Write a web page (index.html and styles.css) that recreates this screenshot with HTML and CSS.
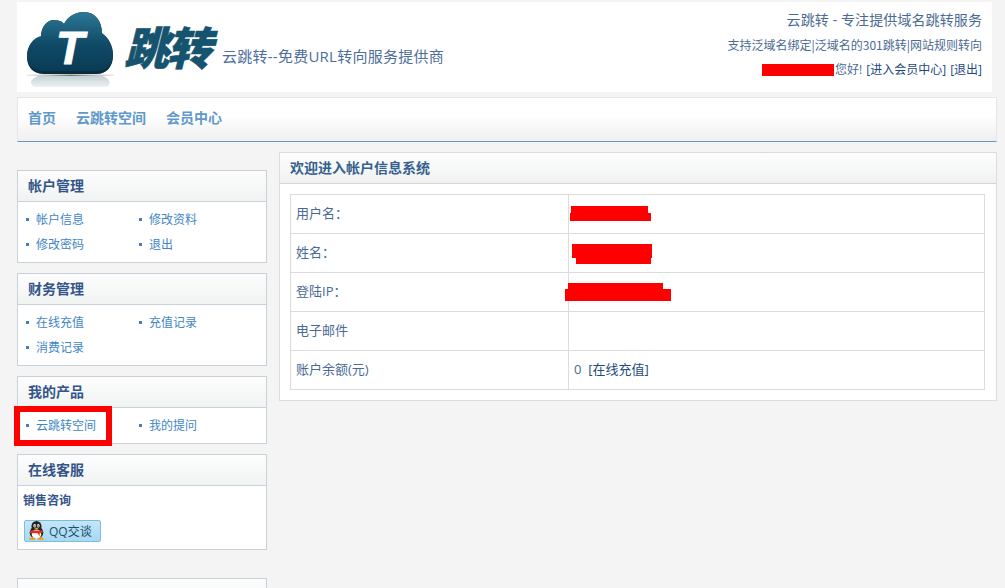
FILE: index.html
```html
<!DOCTYPE html>
<html lang="zh-CN">
<head>
<meta charset="utf-8">
<title>云跳转</title>
<link rel="stylesheet" href="styles.css">
</head>
<body>
<div class="page">
  <header class="top">
    <div class="brand">
      <svg class="cloud" width="90" height="78" viewBox="25 11 90 78" aria-hidden="true">
        <defs>
          <linearGradient id="cg" x1="0" y1="0" x2="0" y2="1">
            <stop offset="0" stop-color="#2d7896"/>
            <stop offset="0.55" stop-color="#0f4a66"/>
            <stop offset="1" stop-color="#0a3b55"/>
          </linearGradient>
          <linearGradient id="rg" x1="0" y1="0" x2="0" y2="1">
            <stop offset="0" stop-color="#c3d2d6"/>
            <stop offset="1" stop-color="#eef2f3"/>
          </linearGradient>
          <linearGradient id="sg" x1="0" y1="0" x2="1" y2="0">
            <stop offset="0" stop-color="#9a9a9a" stop-opacity="0.2"/>
            <stop offset="0.5" stop-color="#6f7a5a"/>
            <stop offset="1" stop-color="#9a9a9a" stop-opacity="0.2"/>
          </linearGradient>
        </defs>
        <path d="M38 76H103C110 79 111 83 108 87H34C29 83 30 79 38 76Z" fill="url(#rg)"/>
        <rect x="27" y="74.500" width="87" height="1.500" fill="url(#sg)"/>
        <path d="M44 74C33 74 27 67 27 57C27 47 33 39 41 37C41 27 47 20 54 20C58 20 62 21 64 24C68 16 76 12 84 12C95 12 102 21 102 34C108 38 113 46 113 56C113 67 106 74 97 74Z" fill="#072d42"/>
        <path d="M44 71C33 71 27 65 27 56C27 46 33 38 41 36C41 27 47 20 54 20C58 20 62 21 64 24C68 16 76 12 84 12C95 12 102 21 102 33C108 37 113 45 113 54C113 65 106 71 97 71Z" fill="url(#cg)"/>
        <text class="cloud-t" x="56" y="64">T</text>
      </svg>
      <span class="brand-name">跳转</span>
      <span class="tagline">云跳转--免费URL转向服务提供商</span>
    </div>
    <div class="top-info">
      <p class="slogan">云跳转 - 专注提供域名跳转服务</p>
      <p class="features">支持泛域名绑定|泛域名的301跳转|网站规则转向</p>
      <p class="welcome"><span class="redact redact-head"></span>您好!<a href="#">[进入会员中心]</a> <a href="#">[退出]</a></p>
    </div>
  </header>

  <nav class="nav">
    <a href="#">首页</a>
    <a href="#">云跳转空间</a>
    <a href="#">会员中心</a>
  </nav>

  <div class="columns">
    <aside class="side">
      <section class="box">
        <h2 class="box-title">帐户管理</h2>
        <ul class="links">
          <li><a href="#">帐户信息</a></li>
          <li><a href="#">修改资料</a></li>
          <li><a href="#">修改密码</a></li>
          <li><a href="#">退出</a></li>
        </ul>
      </section>
      <section class="box">
        <h2 class="box-title">财务管理</h2>
        <ul class="links">
          <li><a href="#">在线充值</a></li>
          <li><a href="#">充值记录</a></li>
          <li><a href="#">消费记录</a></li>
        </ul>
      </section>
      <section class="box box-marked">
        <h2 class="box-title">我的产品</h2>
        <ul class="links links-single">
          <li><a href="#">云跳转空间</a></li>
          <li><a href="#">我的提问</a></li>
        </ul>
        <span class="marker"></span>
      </section>
      <section class="box">
        <h2 class="box-title">在线客服</h2>
        <div class="service">
          <h3 class="service-title">销售咨询</h3>
          <a class="qq" href="#">
            <svg width="17" height="19" viewBox="0 0 16 18" aria-hidden="true">
              <ellipse cx="8" cy="11" rx="6.500" ry="6" fill="#222"/>
              <ellipse cx="8" cy="5" rx="4.800" ry="5" fill="#222"/>
              <ellipse cx="8" cy="12.500" rx="4.500" ry="4.500" fill="#fff"/>
              <ellipse cx="6.300" cy="4.500" rx="1.300" ry="1.700" fill="#fff"/>
              <ellipse cx="9.700" cy="4.500" rx="1.300" ry="1.700" fill="#fff"/>
              <circle cx="6.500" cy="4.800" r="0.700" fill="#222"/>
              <circle cx="9.500" cy="4.800" r="0.700" fill="#222"/>
              <path d="M5.500 6.500H10.500L8 8Z" fill="#f0a020"/>
              <path d="M2 9H14V11L11 11.500V14.500L9 11.500H2Z" fill="#e0301e"/>
              <ellipse cx="4" cy="16.800" rx="3" ry="1.200" fill="#f0a020"/>
              <ellipse cx="12" cy="16.800" rx="3" ry="1.200" fill="#f0a020"/>
            </svg>
            <span>QQ交谈</span>
          </a>
        </div>
      </section>
      <section class="box box-next">
        <h2 class="box-title"></h2>
      </section>
    </aside>

    <main class="main">
      <h1 class="main-title">欢迎进入帐户信息系统</h1>
      <div class="main-body">
        <table class="info">
          <tr><th>用户名<span class="colon">：</span></th><td><span class="redact r1a"></span><span class="redact r1b"></span></td></tr>
          <tr><th>姓名<span class="colon">：</span></th><td><span class="redact r2a"></span><span class="redact r2b"></span></td></tr>
          <tr><th>登陆IP<span class="colon">：</span></th><td><span class="redact r3a"></span><span class="redact r3b"></span></td></tr>
          <tr><th>电子邮件</th><td></td></tr>
          <tr><th>账户余额(元)</th><td>0 &nbsp;<a class="recharge" href="#">[在线充值]</a></td></tr>
        </table>
      </div>
    </main>
  </div>
</div>
</body>
</html>
```

FILE: styles.css
```css
* { box-sizing: border-box; }
html, body { height: 588px; overflow: hidden; }
body {
  margin: 0;
  background: #f5f4f4;
  color: #4a6a94;
  font-family: "Open Sans", "Noto Sans CJK SC", sans-serif;
  font-size: 12px;
}
a { text-decoration: none; color: inherit; }
p, h1, h2, h3, ul { margin: 0; padding: 0; }

.page { width: 997px; padding: 2px 0 0 17px; }

/* header */
.top {
  width: 975px;
  height: 90px;
  background: #fff;
  display: flex;
  justify-content: space-between;
}
.brand { display: flex; align-items: flex-start; padding: 9px 0 0 8px; }
.cloud { flex: none; }
.cloud-t { font: italic 700 46px "Liberation Sans", sans-serif; fill: #fff; stroke: #fff; stroke-width: 1px; }
.brand-name {
  margin: 7px 0 0 9px;
  color: #15536f;
  font-size: 45px;
  line-height: 60px;
  font-weight: 900;
  font-style: italic;
  letter-spacing: -2px;
  -webkit-text-stroke: 0.6px #15536f;
}
.tagline { margin: 34px 0 0 12px; font-size: 15px; line-height: 22px; color: #4d6d9c; letter-spacing: 0.25px; }
.top-info { padding: 7px 10px 0 0; text-align: right; }
.slogan { font-size: 14px; line-height: 22px; letter-spacing: 0.1px; }
.features { margin-top: 4px; font-family: "Noto Sans CJK SC", sans-serif; font-size: 12px; line-height: 20px; }
.welcome { margin-top: 5px; font-size: 12px; line-height: 20px; display: flex; justify-content: flex-end; white-space: pre; }
.welcome a { color: #1f4a7c; margin-left: 4px; }
.redact { background: #f00; display: block; }
.redact-head { width: 72px; height: 12px; margin: 4px 1px 0 0; }

/* nav */
.nav {
  margin-top: 5px;
  width: 980px;
  height: 45px;
  display: flex;
  gap: 20px;
  align-items: center;
  padding: 0 0 6px 10px;
  background: linear-gradient(#fff 40%, #efefef);
  border: 1px solid #e6e6e6;
  border-bottom: 1px solid #6b96c6;
}
.nav a { color: #5f98cc; font-size: 14px; font-weight: 700; }

/* columns */
.columns { display: grid; grid-template-columns: 250px 718px; column-gap: 12px; }
.side { padding-top: 28px; display: flex; flex-direction: column; gap: 10px; }

.box { background: #fff; border: 1px solid #c6d1d9; position: relative; }
.box-title {
  height: 31px;
  padding-left: 10px;
  font-size: 14px;
  line-height: 29px;
  font-weight: 700;
  color: #34558a;
  background: linear-gradient(#fdfdfd, #f1f3f3);
  border-bottom: 1px solid #c6d1d9;
}
.links {
  list-style: none;
  display: grid;
  grid-template-columns: 113px 113px;
  grid-auto-rows: 25px;
  padding: 5px 0 5px 8px;
  min-height: 60px;
}
.links-single { min-height: 35px; }
.links li {
  display: flex;
  align-items: center;
  gap: 7px;
  line-height: 25px;
  color: #3f86c4;
}
.links li::before {
  content: "";
  width: 3px;
  height: 3px;
  background: #3f7fc0;
  flex: none;
}
.marker {
  position: absolute;
  left: -4px;
  top: 29px;
  width: 98px;
  height: 40px;
  border: 6px solid #f00;
}

.service { height: 63px; padding: 6px 0 0 5px; }
.service-title { font-size: 12px; line-height: 18px; font-weight: 700; color: #34558a; }
.qq {
  margin: 10px 0 0 1px;
  width: 77px;
  height: 22px;
  display: flex;
  align-items: center;
  gap: 4px;
  padding: 0 0 1px 3px;
  border: 1px solid #7fbbdc;
  border-radius: 2px;
  background: linear-gradient(#c4e6f7, #a6d9f2);
  color: #1d4d6c;
  font-size: 12px;
}
.box-next { margin-top: 18px; height: 60px; flex: none; }

/* main */
.main { margin-top: 10px; height: 249px; background: #fff; border: 1px solid #dcdcdc; }
.main-title {
  height: 31px;
  padding-left: 10px;
  font-size: 14px;
  line-height: 29px;
  font-weight: 700;
  color: #35608f;
  background: linear-gradient(#fdfdfd, #f0f2f2);
  border-bottom: 1px solid #d6d6d6;
}
.main-body { padding: 10px 11px 0 10px; }
.info { width: 695px; border-collapse: collapse; table-layout: fixed; font-size: 13px; }
.info tr { height: 39px; }
.info th, .info td {
  border: 1px solid #dcdcdc;
  padding: 0 0 3px 5px;
  text-align: left;
  font-weight: 400;
  color: #4a6a94;
  position: relative;
}
.colon { font-family: "Noto Sans CJK TC", sans-serif; }
.info th { width: 278px; }
.info a { color: #1f4a7c; }
.info .redact { position: absolute; }
.r1a { left: 2px; top: 11px; width: 77px; height: 8px; }
.r1b { left: 1px; top: 18px; width: 81px; height: 8px; }
.r2a { left: 3px; top: 10px; width: 80px; height: 14px; }
.r2b { left: 7px; top: 24px; width: 75px; height: 6px; }
.r3a { left: -1px; top: 10px; width: 95px; height: 6px; }
.r3b { left: -4px; top: 16px; width: 106px; height: 12px; }
```
